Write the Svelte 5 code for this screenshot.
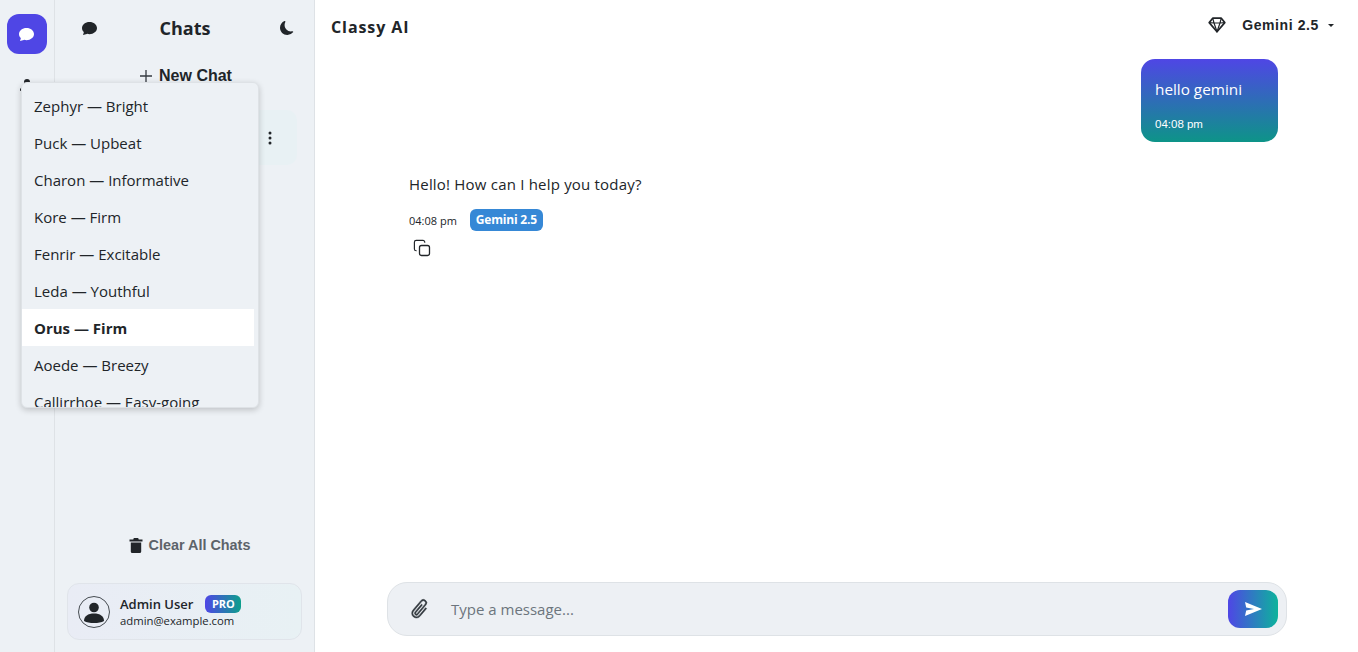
<script lang="ts">
  const voices = [
    'Zephyr — Bright',
    'Puck — Upbeat',
    'Charon — Informative',
    'Kore — Firm',
    'Fenrir — Excitable',
    'Leda — Youthful',
    'Orus — Firm',
    'Aoede — Breezy',
    'Callirrhoe — Easy-going'
  ];
  let selected = 'Orus — Firm';
</script>

<div class="app">
  <nav class="rail">
    <div class="logo">
      <svg width="15" height="14" viewBox="0 0 16 16" preserveAspectRatio="none"><path fill="#fff" d="M16 8c0 3.870-3.580 7-8 7a9 9 0 0 1-2.350-.3c-.58.3-1.920.87-4.180 1.240-.2.03-.35-.18-.27-.37.35-.84.67-1.960.76-2.980C.68 11.400 0 9.770 0 8c0-3.870 3.580-7 8-7s8 3.130 8 7z"/></svg>
    </div>
    <svg class="rail-icon" width="16" height="16" viewBox="0 0 16 16"><path fill="#212529" d="M8 8a3 3 0 1 0 0-6 3 3 0 0 0 0 6zM2 14s-1 0-1-1 1-4 7-4 7 3 7 4-1 1-1 1H2z"/></svg>
  </nav>

  <aside class="sidebar">
    <header class="side-head">
      <svg width="15" height="14" viewBox="0 0 16 16" preserveAspectRatio="none"><path fill="#212529" d="M16 8c0 3.870-3.580 7-8 7a9 9 0 0 1-2.350-.3c-.58.3-1.920.87-4.180 1.240-.2.03-.35-.18-.27-.37.35-.84.67-1.960.76-2.980C.68 11.400 0 9.770 0 8c0-3.870 3.580-7 8-7s8 3.130 8 7z"/></svg>
      <h2>Chats</h2>
      <svg width="14" height="14" viewBox="0 0 16 16"><path fill="#212529" d="M6 .28a.77.77 0 0 1 .08.86 7.200 7.200 0 0 0-.85 3.430c0 4.030 3.290 7.290 7.340 7.290.53 0 1.040-.06 1.540-.16a.79.79 0 0 1 .81.32.73.73 0 0 1-.03.89A8.350 8.350 0 0 1 8.340 16C3.730 16 0 12.290 0 7.710 0 4.270 2.110 1.310 5.120.06A.75.75 0 0 1 6 .28z"/></svg>
    </header>

    <button class="new-chat">
      <svg width="16" height="16" viewBox="0 0 16 16"><path fill="none" stroke="#343a40" stroke-width="1.300" d="M8 2v12M2 8h12"/></svg>
      New Chat
    </button>

    <div class="chat-row">
      <svg width="16" height="16" viewBox="0 0 16 16"><path fill="#212529" d="M9.500 13a1.500 1.500 0 1 1-3 0 1.500 1.500 0 0 1 3 0zm0-5a1.500 1.500 0 1 1-3 0 1.500 1.500 0 0 1 3 0zm0-5a1.500 1.500 0 1 1-3 0 1.500 1.500 0 0 1 3 0z"/></svg>
    </div>

    <div class="spacer"></div>

    <button class="clear">
      <svg width="14" height="16" viewBox="0 0 14 16"><path fill="#212529" d="M0.500 2.600h13v2H.5zM4.800 1h4.400l.6 1.800H4.200zM1.800 5.400h10.400v9c0 .9-.6 1.500-1.400 1.500H3.200c-.8 0-1.400-.6-1.400-1.500z"/></svg>
      Clear All Chats
    </button>

    <div class="user">
      <svg class="avatar" width="32" height="32" viewBox="0 0 32 32">
        <circle cx="16" cy="16" r="15.500" fill="none" stroke="#343a40" stroke-width="0.9"/>
        <circle cx="16" cy="11.500" r="4.800" fill="#212529"/>
        <path fill="#212529" d="M6 25c0-5 4-7.500 10-7.500s10 2.500 10 7.500c-2.500 1.500-6 2-10 2s-7.500-.5-10-2z"/>
      </svg>
      <div class="user-text">
        <div class="user-name">Admin User <span class="pro">PRO</span></div>
        <div class="user-mail">admin@example.com</div>
      </div>
    </div>
  </aside>

  <main class="main">
    <header class="top">
      <h1>Classy AI</h1>
      <div class="model">
        <svg width="18" height="16" viewBox="0 0 18 16" fill="none" stroke="#212529" stroke-width="1.700" stroke-linejoin="round">
          <path d="M4.700 1.200h8.600L16.800 5.600 9 14.800 1.200 5.600z"/>
          <path d="M4.700 1.200 6 6l3 8.800L12 6l1.300-4.800M1.200 5.600 6 6h6l4.800-.4" stroke-width="1.200"/>
        </svg>
        <span class="model-name">Gemini 2.5</span>
        <span class="caret"></span>
      </div>
    </header>

    <section class="thread">
      <div class="bubble">
        <div class="bubble-text">hello gemini</div>
        <div class="bubble-time">04:08 pm</div>
      </div>

      <div class="reply">
        <p>Hello! How can I help you today?</p>
        <div class="meta">
          <span class="time">04:08 pm</span>
          <span class="badge">Gemini 2.5</span>
        </div>
        <svg class="copy" width="18" height="18" viewBox="0 0 18 18" fill="none" stroke="#212529" stroke-width="1.300">
          <rect x="6.500" y="6.500" width="10" height="10" rx="2"/>
          <path d="M12.500 3.500V3a2 2 0 0 0-2-2H3a2 2 0 0 0-2 2v7.500a2 2 0 0 0 2 2h.5" transform="translate(0.500 0.500) scale(0.900)"/>
        </svg>
      </div>
    </section>

    <footer class="composer">
      <svg class="clip" width="22" height="22" viewBox="0 0 16 16"><path fill="#343a40" stroke="#343a40" stroke-width="0.3" d="M4.500 3a2.500 2.500 0 0 1 5 0v9a1.500 1.500 0 0 1-3 0V5a.5.5 0 0 1 1 0v7a.5.5 0 0 0 1 0V3a1.500 1.500 0 1 0-3 0v9a2.500 2.500 0 0 0 5 0V5a.5.5 0 0 1 1 0v7a3.500 3.500 0 1 1-7 0V3z"/></svg>
      <span class="placeholder">Type a message...</span>
      <button class="send">
        <svg width="17" height="14" viewBox="0 0 17 14"><path fill="#fff" d="M0 0 17 7 0 14l1.200-5.600L9 7 1.200 5.600z"/></svg>
      </button>
    </footer>
  </main>

  <div class="voices">
    <ul>
      {#each voices as voice}
        <li class:active={voice === selected}>{voice}</li>
      {/each}
    </ul>
  </div>
</div>

<style>
  :global(body) {
    margin: 0;
    background: #fff;
    color: #212529;
    font-family: "Open Sans", "Noto Sans", sans-serif;
  }

  .app {
    display: flex;
    height: 652px;
    overflow: hidden;
    position: relative;
  }

  .rail {
    width: 54px;
    flex-shrink: 0;
    background: #edf1f5;
    border-right: 1px solid #dee2e6;
    display: flex;
    flex-direction: column;
    align-items: center;
    padding-top: 14px;
  }

  .logo {
    width: 40px;
    height: 40px;
    margin-right: 1px;
    border-radius: 12px;
    background: #4f46e5;
    display: flex;
    align-items: center;
    justify-content: center;
  }

  .rail-icon {
    margin-top: 23px;
  }

  .sidebar {
    width: 259px;
    flex-shrink: 0;
    background: #edf1f5;
    border-right: 1px solid #dee2e6;
    display: flex;
    flex-direction: column;
  }

  .side-head {
    height: 56px;
    padding: 0 20px 0 27px;
    display: flex;
    align-items: center;
    justify-content: space-between;
  }

  .side-head h2 {
    margin: 0 7px 0 0;
    font-size: 18px;
    font-weight: 700;
    line-height: 1;
  }

  .new-chat {
    align-self: center;
    margin-top: 7px;
    margin-left: 1px;
    padding: 0;
    height: 26px;
    display: flex;
    align-items: center;
    gap: 5px;
    border: 0;
    background: none;
    color: #212529;
    font-family: "Liberation Sans", Arial, sans-serif;
    font-size: 16px;
    font-weight: 700;
  }

  .chat-row {
    margin: 21px 17px 0 17px;
    height: 55px;
    border-radius: 10px;
    background: #e8f1f4;
    display: flex;
    align-items: center;
    justify-content: flex-end;
    padding-right: 19px;
  }

  .spacer {
    flex: 1;
  }

  .clear {
    align-self: center;
    margin-left: 10px;
    padding: 0;
    display: flex;
    align-items: center;
    gap: 6px;
    border: 0;
    background: none;
    color: #5c636a;
    font-family: "Liberation Sans", Arial, sans-serif;
    font-size: 14.400px;
    font-weight: 700;
    height: 20px;
  }

  .user {
    margin: 28px 12px 12px 12px;
    height: 57px;
    box-sizing: border-box;
    border: 1px solid #e0e4ea;
    border-radius: 12px;
    background: linear-gradient(90deg, #e9ecf5, #e8f1f4);
    display: flex;
    align-items: center;
    gap: 10px;
    padding-left: 10px;
  }

  .user-name {
    font-size: 13px;
    font-weight: 600;
    line-height: 18px;
    display: flex;
    align-items: center;
    gap: 12px;
  }

  .pro {
    padding: 0 6.500px;
    height: 18px;
    border-radius: 6px;
    background: linear-gradient(90deg, #4f46e5, #0d9f8c);
    color: #fff;
    font-size: 11px;
    font-weight: 700;
    line-height: 18px;
  }

  .user-mail {
    font-size: 11.300px;
    line-height: 16px;
  }

  .main {
    flex: 1;
    min-width: 0;
    display: flex;
    flex-direction: column;
  }

  .top {
    height: 50px;
    padding: 0 24px 0 16px;
    display: flex;
    align-items: center;
    justify-content: space-between;
  }

  .top h1 {
    margin: 4px 0 0;
    font-size: 16px;
    font-weight: 700;
    letter-spacing: 0.9px;
  }

  .model {
    display: flex;
    align-items: center;
  }

  .model-name {
    margin-left: 16px;
    font-family: "Liberation Sans", Arial, sans-serif;
    font-size: 14px;
    font-weight: 700;
    letter-spacing: 0.6px;
  }

  .caret {
    margin-left: 9px;
    border: 3.500px solid transparent;
    border-top-color: #212529;
    border-bottom: 0;
  }

  .thread {
    flex: 1;
    padding: 9px 80px 0 94px;
    display: flex;
    flex-direction: column;
  }

  .bubble {
    align-self: flex-end;
    width: 137px;
    height: 83px;
    box-sizing: border-box;
    padding: 18px 14px 0;
    border-radius: 14px;
    background: linear-gradient(180deg, #4f46e5, #0d9488);
    color: #fff;
  }

  .bubble-text {
    font-size: 15.300px;
    line-height: 24px;
  }

  .bubble-time {
    margin-top: 16px;
    font-family: "Liberation Sans", Arial, sans-serif;
    font-size: 11.500px;
    line-height: 14px;
  }

  .reply {
    margin-top: 31px;
  }

  .reply p {
    margin: 0;
    font-size: 15px;
    line-height: 22px;
    letter-spacing: 0.2px;
  }

  .meta {
    margin-top: 14px;
    display: flex;
    align-items: center;
    gap: 13px;
  }

  .time {
    font-size: 11px;
  }

  .badge {
    height: 22px;
    padding: 0 6px;
    border-radius: 6px;
    background: #3688d6;
    color: #fff;
    font-size: 12px;
    font-weight: 700;
    line-height: 22px;
    letter-spacing: -0.2px;
  }

  .copy {
    display: block;
    margin: 8px 0 0 4px;
  }

  .composer {
    margin: 0 71px 16px 72px;
    height: 54px;
    box-sizing: border-box;
    border: 1px solid #dee2e6;
    border-radius: 20px;
    background: #edf0f4;
    display: flex;
    align-items: center;
    padding: 0 8px 0 21px;
  }

  .clip {
    transform: rotate(40deg);
  }

  .placeholder {
    flex: 1;
    margin-left: 20px;
    color: #6c757d;
    font-size: 15px;
  }

  .send {
    width: 50px;
    height: 38px;
    padding: 0;
    border: 0;
    border-radius: 12px;
    background: linear-gradient(90deg, #4f46e5, #0db39c);
    display: flex;
    align-items: center;
    justify-content: center;
  }

  /* open voice dropdown */
  .voices {
    position: absolute;
    left: 21px;
    top: 82px;
    width: 238px;
    height: 326px;
    box-sizing: border-box;
    overflow: hidden;
    border-radius: 6px;
    border: 1px solid #dee2e6;
    background: #edf1f5;
    box-shadow: 0 2px 6px rgba(0, 0, 0, 0.2);
  }

  .voices ul {
    list-style: none;
    margin: 0;
    padding: 4px 0 0;
    width: 232px;
  }

  .voices li {
    height: 37px;
    padding-left: 12px;
    font-size: 15px;
    line-height: 39px;
    white-space: nowrap;
  }

  .voices li.active {
    background: #fff;
    font-weight: 700;
  }
</style>
